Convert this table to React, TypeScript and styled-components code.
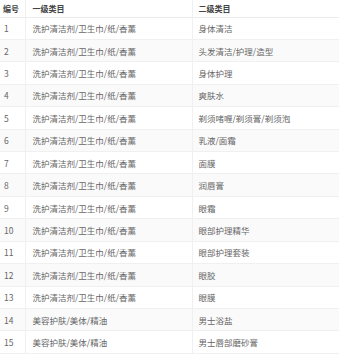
import styled, {createGlobalStyle} from "styled-components";

const GlobalStyle = createGlobalStyle`
  html, body {
    margin: 0;
    padding: 0;
    background: #fff;
  }
  body {
    font-family: "Noto Sans CJK SC", "Noto Sans", sans-serif;
  }
`

const Table = styled.table`
  width: 339px;
  border-collapse: collapse;
  table-layout: fixed;
  font-size: 8.5px;
  color: #666;
`

const HeadRow = styled.tr`
  height: 17px;
  border-bottom: 1px solid #ebebeb;
`

const HeadCell = styled.th<{ $pad: number }>`
  text-align: left;
  font-weight: 700;
  font-size: 8px;
  color: #444;
  padding: 0 0 0 ${(p) => p.$pad}px;
  line-height: 15px;
  border-right: 1px solid #f0f0f0;
  &:last-child {
    border-right: none;
  }
`

const Row = styled.tr<{ $striped: boolean }>`
  height: 22.43px;
  background: ${(p) => (p.$striped ? "#fafafa" : "#fff")};
  border-bottom: 1px solid #f0f0f0;
`

const Cell = styled.td<{ $pad: number }>`
  padding: 0 0 0 ${(p) => p.$pad}px;
  white-space: nowrap;
  overflow: hidden;
  border-right: 1px solid #f0f0f0;
  &:last-child {
    border-right: none;
  }
`

const cleaning = "洗护清洁剂/卫生巾/纸/香薰";
const beauty = "美容护肤/美体/精油";

const rows: [string, string][] = [
  [cleaning, "身体清洁"],
  [cleaning, "头发清洁/护理/造型"],
  [cleaning, "身体护理"],
  [cleaning, "爽肤水"],
  [cleaning, "剃须啫喱/剃须膏/剃须泡"],
  [cleaning, "乳液/面霜"],
  [cleaning, "面膜"],
  [cleaning, "润唇膏"],
  [cleaning, "眼霜"],
  [cleaning, "眼部护理精华"],
  [cleaning, "眼部护理套装"],
  [cleaning, "眼胶"],
  [cleaning, "眼膜"],
  [beauty, "男士浴盐"],
  [beauty, "男士唇部磨砂膏"],
];

export default function App() {
  return (
    <>
      <GlobalStyle />
      <Table>
        <colgroup>
          <col style={{width: 25}} />
          <col style={{width: 167}} />
          <col />
        </colgroup>
        <thead>
          <HeadRow>
            <HeadCell $pad={3}>编号</HeadCell>
            <HeadCell $pad={7}>一级类目</HeadCell>
            <HeadCell $pad={6}>二级类目</HeadCell>
          </HeadRow>
        </thead>
        <tbody>
          {rows.map(([first, second], i) => (
            <Row key={i} $striped={i % 2 === 1}>
              <Cell $pad={4}>{i + 1}</Cell>
              <Cell $pad={7}>{first}</Cell>
              <Cell $pad={6}>{second}</Cell>
            </Row>
          ))}
        </tbody>
      </Table>
    </>
  );
}
